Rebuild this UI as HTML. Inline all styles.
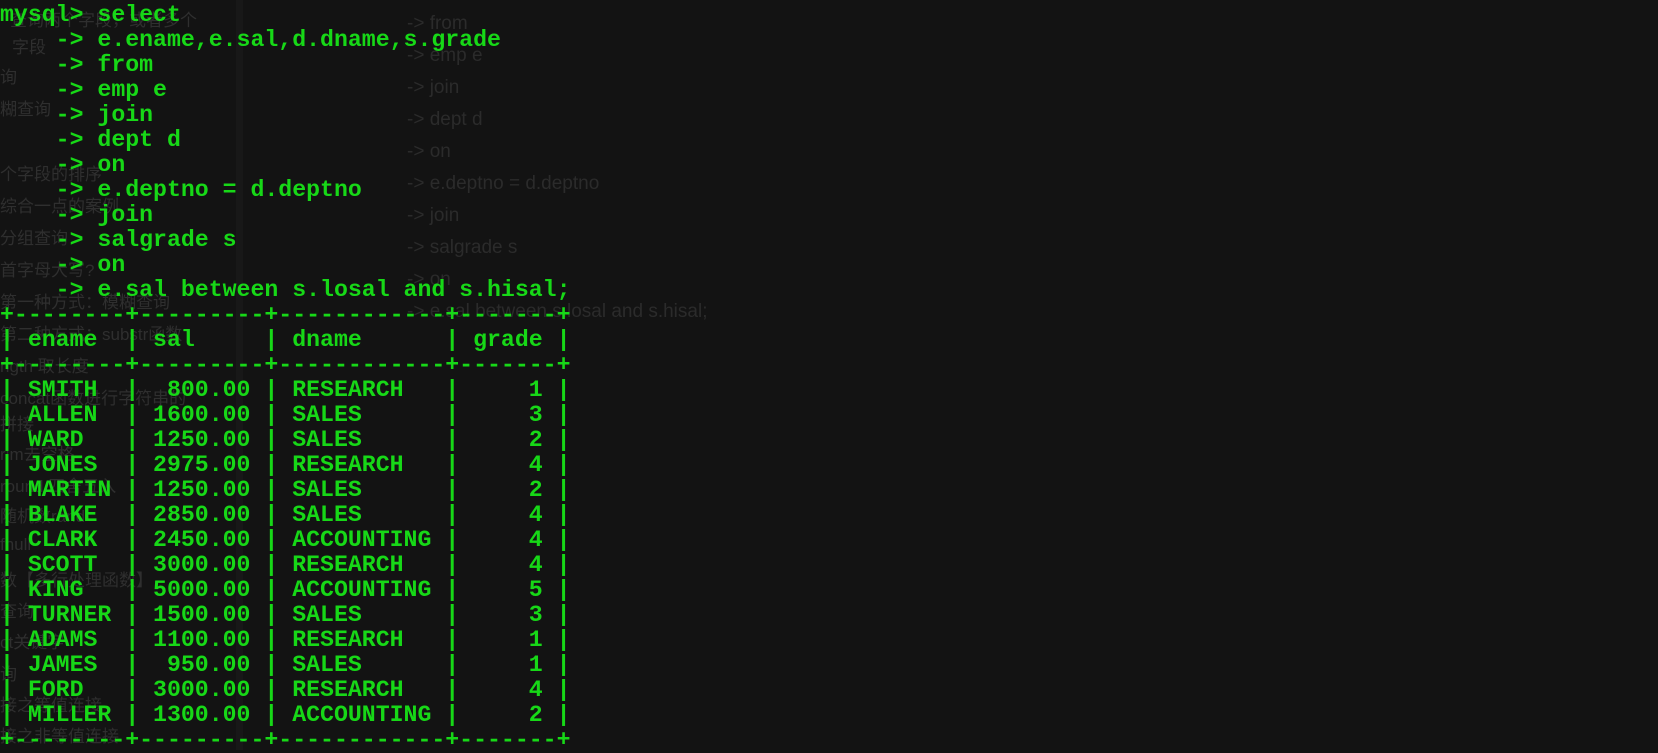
<!DOCTYPE html>
<html><head><meta charset="utf-8"><style>
html,body{margin:0;padding:0;width:1658px;height:750px;overflow:hidden;background:#131313;}
.band{position:absolute;left:236px;top:0;width:7px;height:750px;background:#181818;}
.ghost{position:absolute;color:#2b2b2b;font-family:"Liberation Sans","Noto Sans CJK SC",sans-serif;font-size:19px;white-space:pre;line-height:20px;}
.gl{position:absolute;color:#2f2f2f;font-family:"Liberation Sans","Noto Sans CJK SC",sans-serif;font-size:17px;white-space:pre;}
pre{position:absolute;left:0;top:3px;margin:0;font-family:"Liberation Mono",monospace;font-weight:bold;font-size:23.2px;line-height:25px;color:#17d817;}
</style></head><body>
<div class="band"></div>
<div class="gl" style="left:10px;top:6px">查询两个字段，或者多个</div>
<div class="gl" style="left:12px;top:33px">字段</div>
<div class="gl" style="left:0;top:63px">询</div>
<div class="gl" style="left:0;top:95px">糊查询</div>
<div class="gl" style="left:0;top:160px">个字段的排序</div>
<div class="gl" style="left:0;top:192px">综合一点的案例</div>
<div class="gl" style="left:0;top:224px">分组查询</div>
<div class="gl" style="left:0;top:256px">首字母大写?</div>
<div class="gl" style="left:0;top:288px">第一种方式：模糊查询</div>
<div class="gl" style="left:0;top:320px">第二种方式：substr函数</div>
<div class="gl" style="left:0;top:352px">ngth 取长度</div>
<div class="gl" style="left:0;top:384px">concat函数进行字符串的</div>
<div class="gl" style="left:0;top:410px">拼接</div>
<div class="gl" style="left:0;top:440px">rim去空格</div>
<div class="gl" style="left:0;top:472px">round 四舍五入</div>
<div class="gl" style="left:0;top:502px">随机数rand</div>
<div class="gl" style="left:0;top:535px">fnull</div>
<div class="gl" style="left:0;top:566px">数【多行处理函数】</div>
<div class="gl" style="left:0;top:597px">查询</div>
<div class="gl" style="left:0;top:628px">ct关键字</div>
<div class="gl" style="left:0;top:660px">询</div>
<div class="gl" style="left:0;top:691px">接之等值连接</div>
<div class="gl" style="left:0;top:722px">接之非等值连接</div>
<div class="ghost" style="left:407px;top:14px">-&gt; from</div>
<div class="ghost" style="left:407px;top:46px">-&gt; emp e</div>
<div class="ghost" style="left:407px;top:78px">-&gt; join</div>
<div class="ghost" style="left:407px;top:110px">-&gt; dept d</div>
<div class="ghost" style="left:407px;top:142px">-&gt; on</div>
<div class="ghost" style="left:407px;top:174px">-&gt; e.deptno = d.deptno</div>
<div class="ghost" style="left:407px;top:206px">-&gt; join</div>
<div class="ghost" style="left:407px;top:238px">-&gt; salgrade s</div>
<div class="ghost" style="left:407px;top:270px">-&gt; on</div>
<div class="ghost" style="left:407px;top:302px">-&gt; e.sal between s.losal and s.hisal;</div>
<pre>mysql&gt; select
    -&gt; e.ename,e.sal,d.dname,s.grade
    -&gt; from
    -&gt; emp e
    -&gt; join
    -&gt; dept d
    -&gt; on
    -&gt; e.deptno = d.deptno
    -&gt; join
    -&gt; salgrade s
    -&gt; on
    -&gt; e.sal between s.losal and s.hisal;
+--------+---------+------------+-------+
| ename  | sal     | dname      | grade |
+--------+---------+------------+-------+
| SMITH  |  800.00 | RESEARCH   |     1 |
| ALLEN  | 1600.00 | SALES      |     3 |
| WARD   | 1250.00 | SALES      |     2 |
| JONES  | 2975.00 | RESEARCH   |     4 |
| MARTIN | 1250.00 | SALES      |     2 |
| BLAKE  | 2850.00 | SALES      |     4 |
| CLARK  | 2450.00 | ACCOUNTING |     4 |
| SCOTT  | 3000.00 | RESEARCH   |     4 |
| KING   | 5000.00 | ACCOUNTING |     5 |
| TURNER | 1500.00 | SALES      |     3 |
| ADAMS  | 1100.00 | RESEARCH   |     1 |
| JAMES  |  950.00 | SALES      |     1 |
| FORD   | 3000.00 | RESEARCH   |     4 |
| MILLER | 1300.00 | ACCOUNTING |     2 |
+--------+---------+------------+-------+</pre>
</body></html>
